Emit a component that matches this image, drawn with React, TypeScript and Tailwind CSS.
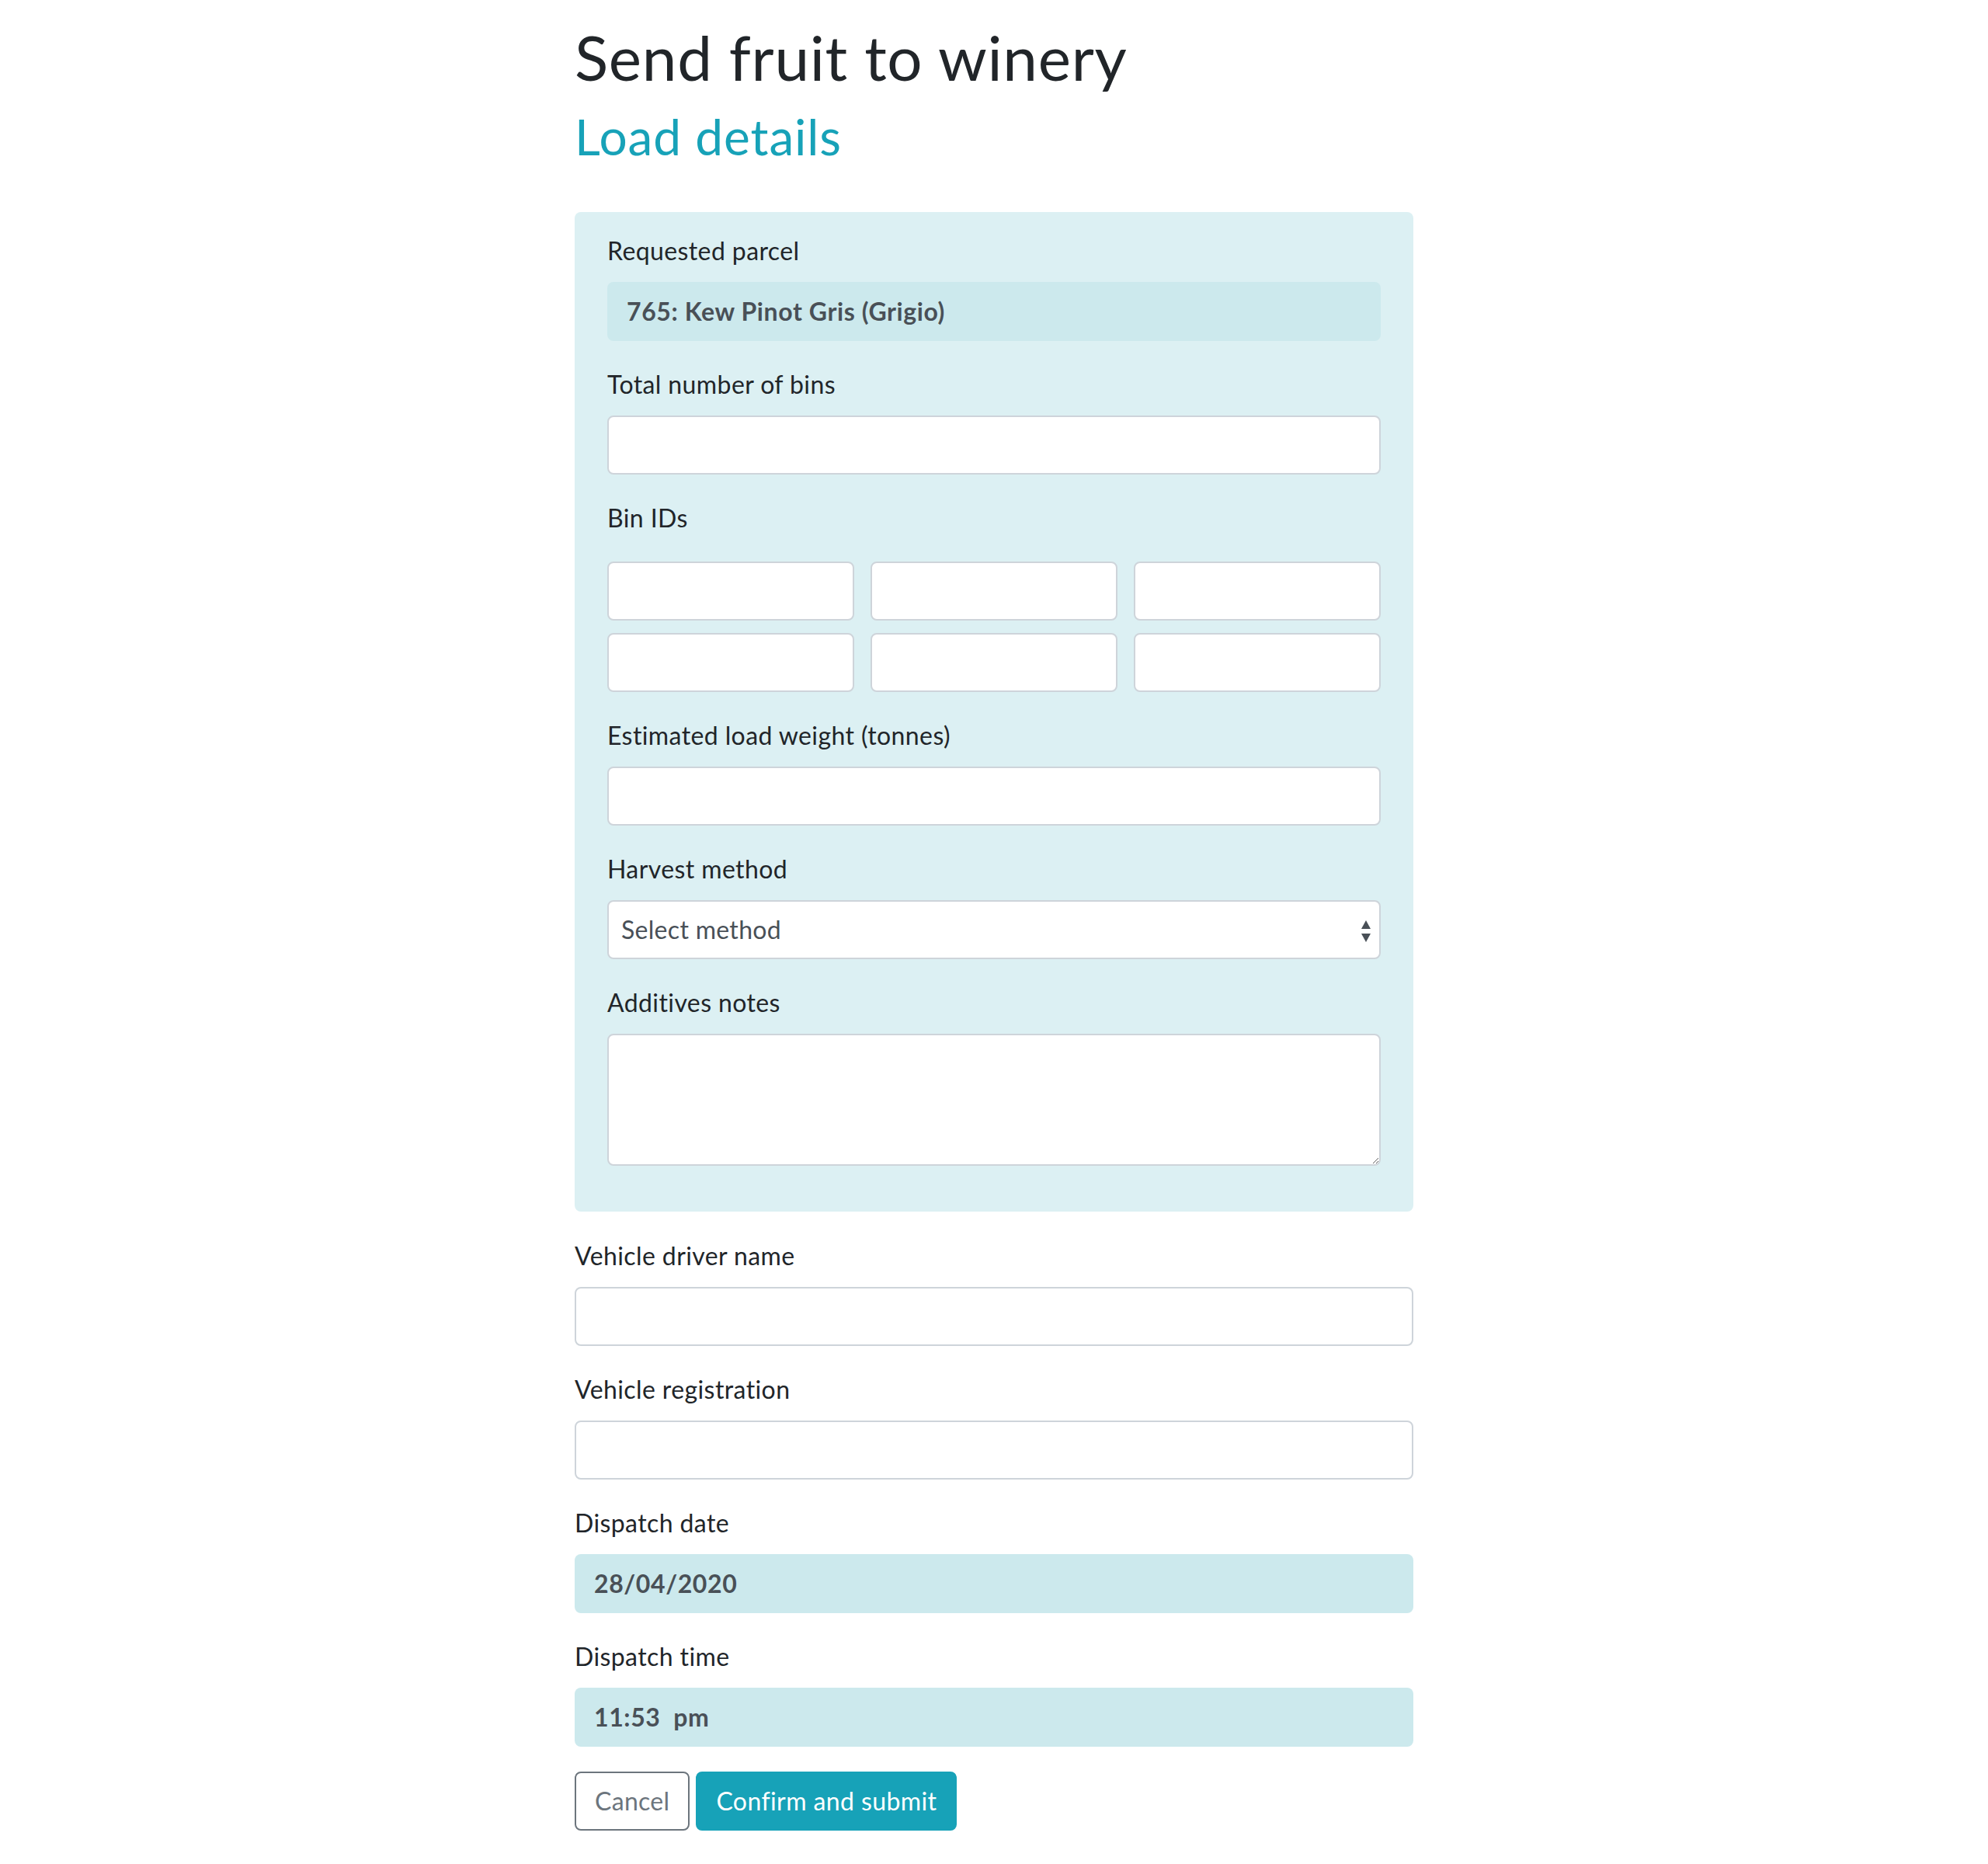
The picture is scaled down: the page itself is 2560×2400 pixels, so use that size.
import React from "react";

const font = { fontFamily: "Lato, 'Noto Sans', sans-serif" };

function Label({ children }: { children: React.ReactNode }) {
  return <div className="text-[32px] leading-[48px] tracking-[0.4px] text-[#212529] mb-[16px]">{children}</div>;
}

function TextInput({ className = "" }: { className?: string }) {
  return (
    <input
      type="text"
      className={"block w-full h-[76px] border-2 border-[#ced4da] rounded-[8px] bg-white px-[24px] text-[32px] outline-none " + className}
    />
  );
}

function ReadOnly({ children }: { children: React.ReactNode }) {
  return (
    <div className="h-[76px] rounded-[8px] bg-[#cce9ed] px-[25px] flex items-center text-[32px] font-bold tracking-[0.6px] text-[#495057]">
      {children}
    </div>
  );
}

export default function App() {
  return (
    <div className="bg-white min-h-[2400px] w-full" style={font}>
      <div className="mx-auto w-[1080px] pt-[25px]">
        <h1 className="text-[80px] leading-[96px] font-normal tracking-[0.7px] text-[#212529] mb-[16px]">Send fruit to winery</h1>
        <h2 className="text-[64px] leading-[77px] font-normal tracking-[0.9px] text-[#17a2b8] mb-[59px]">Load details</h2>

        <div className="bg-[#dcf0f3] rounded-[8px] px-[42px] pt-[26px] pb-[27px] mb-[33px]">
          <div className="mb-[32px]">
            <Label>Requested parcel</Label>
            <ReadOnly>765: Kew Pinot Gris (Grigio)</ReadOnly>
          </div>
          <div className="mb-[32px]">
            <Label>Total number of bins</Label>
            <TextInput />
          </div>
          <div className="mb-[32px]">
            <Label>Bin IDs</Label>
            <div className="grid grid-cols-3 gap-x-[21px] gap-y-[16px] pt-[16px]">
              <TextInput />
              <TextInput />
              <TextInput />
              <TextInput />
              <TextInput />
              <TextInput />
            </div>
          </div>
          <div className="mb-[32px]">
            <Label>Estimated load weight (tonnes)</Label>
            <TextInput />
          </div>
          <div className="mb-[32px]">
            <Label>Harvest method</Label>
            <div className="relative h-[76px] border-2 border-[#ced4da] rounded-[8px] bg-white flex items-center px-[16px] text-[32px] tracking-[0.3px] text-[#495057]">
              <span>Select method</span>
              <svg className="absolute right-[9px] top-[22px]" width="16" height="32" viewBox="0 0 16 32">
                <polygon points="8,2 14,13 2,13" fill="#495057" />
                <polygon points="2,19 14,19 8,30" fill="#495057" />
              </svg>
            </div>
          </div>
          <div className="mb-[32px]">
            <Label>Additives notes</Label>
            <textarea className="block w-full h-[170px] border-2 border-[#ced4da] rounded-[8px] bg-white px-[24px] py-[12px] text-[32px] outline-none resize-y" />
          </div>
        </div>

        <div className="mb-[32px]">
          <Label>Vehicle driver name</Label>
          <TextInput />
        </div>
        <div className="mb-[32px]">
          <Label>Vehicle registration</Label>
          <TextInput />
        </div>
        <div className="mb-[32px]">
          <Label>Dispatch date</Label>
          <ReadOnly>28/04/2020</ReadOnly>
        </div>
        <div className="mb-[32px]">
          <Label>Dispatch time</Label>
          <ReadOnly>11:53&nbsp; pm</ReadOnly>
        </div>

        <div className="flex gap-[8px]">
          <button className="h-[76px] px-[24px] border-2 border-[#6c757d] rounded-[8px] text-[32px] tracking-[0.3px] text-[#6c757d] bg-white">
            Cancel
          </button>
          <button className="h-[76px] px-[24px] border-2 border-[#17a2b8] rounded-[8px] text-[32px] tracking-[0.4px] text-white bg-[#17a2b8]">
            Confirm and submit
          </button>
        </div>
      </div>
    </div>
  );
}
